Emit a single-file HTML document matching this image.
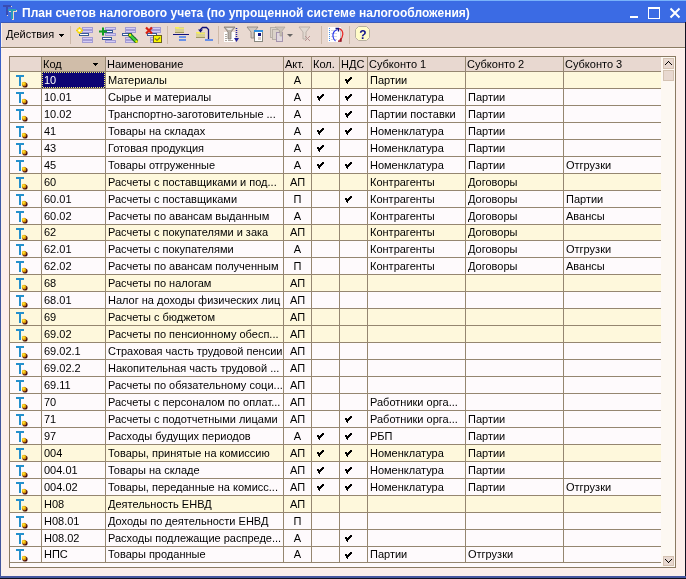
<!DOCTYPE html><html><head><meta charset="utf-8"><style>
*{margin:0;padding:0;box-sizing:border-box}
html,body{width:686px;height:579px;overflow:hidden;background:#FCEFEB;font-family:"Liberation Sans",sans-serif;font-size:11px;color:#000}
.a{position:absolute}
.t{position:absolute;white-space:nowrap;line-height:13px;font-size:11px;will-change:transform}
.ic{position:absolute}

</style></head><body>
<div class="a" style="left:0;top:0;width:686px;height:22px;background:#3B6BE4"></div>
<div class="a" style="left:0;top:0;width:686px;height:1px;background:#78B2FA"></div>
<div class="a" style="left:0;top:22px;width:686px;height:1px;background:#3A58B4"></div>
<svg class="a" style="left:0;top:0" width="22" height="22" viewBox="0 0 22 22" shape-rendering="crispEdges">
<path d="M4 6h8v1H4z M7 6h1v10H7z" fill="#F0D8C8"/>
<path d="M3 5h8v2H3z M6 5h2v10H6z" fill="#3A4CB0"/>
<path d="M9 10h8v2H9z M12 10h2v10H12z" fill="#F0D8C8"/>
<path d="M8 9h8v2H8z M11 9h2v10H11z" fill="#2A9CB8"/>
</svg>
<div class="t" style="left:22px;top:7px;color:#fff;font-weight:bold;font-size:12px;letter-spacing:0.02px">План счетов налогового учета (по упрощенной системе налогообложения)</div>
<div class="a" style="left:630px;top:16px;width:8px;height:2px;background:#fff"></div>
<div class="a" style="left:648px;top:7px;width:12px;height:12px;border:1px solid #fff;border-top-width:2px"></div>
<svg class="a" style="left:669px;top:7px" width="12" height="12" viewBox="0 0 12 12"><path d="M1.5 1.5L10.5 10.5M10.5 1.5L1.5 10.5" stroke="#fff" stroke-width="2"/></svg>
<div class="a" style="left:0;top:22px;width:1px;height:557px;background:linear-gradient(#3A62D0,#40569C 40%,#44549C)"></div>
<div class="a" style="left:685px;top:22px;width:1px;height:557px;background:#101020"></div>
<div class="a" style="left:0;top:576px;width:686px;height:2px;background:#4858A0"></div>
<div class="a" style="left:0;top:578px;width:686px;height:1px;background:#101020"></div>
<div class="a" style="left:1px;top:23px;width:684px;height:24px;background:#E9D9D1"></div>
<div class="a" style="left:1px;top:23px;width:1px;height:553px;background:#F8F0EC"></div>
<div class="a" style="left:1px;top:47px;width:684px;height:1px;background:#8C7C64"></div>
<div class="a" style="left:1px;top:48px;width:684px;height:1px;background:#FFF8F4"></div>
<div class="t" style="left:6px;top:28px">Действия</div>
<svg class="a" style="left:59px;top:34px" width="5" height="3" shape-rendering="crispEdges"><path d="M0 0h5v1h-1v1h-1v1h-1v-1h-1v-1h-1z" fill="#000"/></svg>
<div class="a" style="left:70px;top:26px;width:1px;height:18px;background:#CDB9A9"></div>
<div class="a" style="left:167px;top:26px;width:1px;height:18px;background:#CDB9A9"></div>
<div class="a" style="left:218px;top:26px;width:1px;height:18px;background:#CDB9A9"></div>
<div class="a" style="left:321px;top:26px;width:1px;height:18px;background:#CDB9A9"></div>
<div class="a" style="left:349px;top:26px;width:1px;height:18px;background:#CDB9A9"></div>
<svg class="a" style="left:0;top:0" width="686" height="48" viewBox="0 0 686 48" shape-rendering="crispEdges">
<g fill="#D4CCF6" stroke="#A49CD4" stroke-width="1">
<rect x="82.5" y="27.5" width="10" height="2"/><rect x="82.5" y="30.5" width="10" height="2"/>
<rect x="82.5" y="37.5" width="10" height="2"/><rect x="82.5" y="40.5" width="10" height="2"/>
<rect x="105.5" y="27.5" width="10" height="2"/><rect x="105.5" y="33.5" width="10" height="2"/><rect x="105.5" y="40.5" width="10" height="2"/>
<rect x="125.5" y="27.5" width="10" height="2"/><rect x="125.5" y="30.5" width="10" height="2"/>
<rect x="125.5" y="37.5" width="10" height="2"/><rect x="125.5" y="40.5" width="10" height="2"/>
<rect x="150.5" y="27.5" width="10" height="2"/><rect x="150.5" y="30.5" width="10" height="2"/>
<rect x="150.5" y="37.5" width="4" height="2"/><rect x="150.5" y="40.5" width="4" height="2"/>
</g>
<g fill="#FFFFFF" stroke="#3A5A98" stroke-width="1">
<rect x="79.5" y="33.5" width="9" height="2"/>
<rect x="104.5" y="30.5" width="8" height="2"/><rect x="102.5" y="37.5" width="9" height="2"/>
<rect x="122.5" y="33.5" width="9" height="2"/>
<rect x="147.5" y="33.5" width="9" height="2"/>
</g>
<g shape-rendering="auto">
<path d="M79.5 27v7M76 30.5h7M77.5 28.5l4 4M81.5 28.5l-4 4" stroke="#F8D800" stroke-width="1.5"/>
<circle cx="79.5" cy="30.5" r="1.3" fill="#FFFFF0"/>
<path d="M99 31.5h8M103 27.5v8" stroke="#10A020" stroke-width="2"/>
<path d="M130 35l6 6" stroke="#186818" stroke-width="4" stroke-linecap="round"/>
<path d="M130 35l6 6" stroke="#40D040" stroke-width="2.4"/>
<circle cx="130" cy="35" r="1.2" fill="#F0F000"/><circle cx="136.5" cy="41.5" r="1.2" fill="#F0F000"/>
<path d="M146 27.5l6 6M152 27.5l-6 6" stroke="#D82010" stroke-width="2.2"/>
</g>
<rect x="153.5" y="35.5" width="8" height="7" fill="#F8F800" stroke="#6A6020"/>
<path d="M155 38.5l2 2 3-3" stroke="#807828" stroke-width="1.2" fill="none" shape-rendering="auto"/>
<rect x="175" y="27" width="9" height="6" fill="#D8D098"/><rect x="175" y="27" width="4" height="1" fill="#F8F050"/><rect x="176" y="28" width="8" height="1" fill="#F0E868"/><rect x="175" y="32" width="9" height="1" fill="#A09860"/>
<rect x="173" y="34" width="16" height="1" fill="#10107A"/>
<rect x="179" y="36" width="7" height="2" fill="#6890E8"/><rect x="179" y="39" width="7" height="2" fill="#6890E8"/>
<rect x="196" y="32" width="9" height="6" fill="#D8D098"/><rect x="196" y="32" width="4" height="1" fill="#F8F050"/><rect x="197" y="33" width="8" height="1" fill="#F0E868"/><rect x="196" y="37" width="9" height="1" fill="#A09860"/>
<path d="M208.5 39V29.5l-2-2h-4l-2 2V31" stroke="#10107A" stroke-width="1.3" fill="none" shape-rendering="auto"/>
<path d="M198 29.5h5l-2.5 3z" fill="#10107A" shape-rendering="auto"/>
<rect x="205" y="39" width="8" height="2" fill="#6890E8"/>
<g shape-rendering="auto">
<rect x="224" y="32" width="11" height="10" fill="#FFFFFF"/>
<path d="M225 34.5h2M225 36.5h2M225 38.5h2M225 40.5h2M228 40.5h5" stroke="#B0A8A0" stroke-width="1"/>
<path d="M224 27h11l-4 5v7h-3v-7z" fill="#B8B0A8" stroke="#807870" stroke-width="0.8"/>
<path d="M226 28h7l-2 2h-3z" fill="#E8E4E0"/>
<path d="M236.5 28v11" stroke="#2020A0" stroke-width="1.5" stroke-dasharray="1 1"/>
<path d="M234 38h5l-2.5 4z" fill="#2020A0"/>
<path d="M247 27h11l-4 5v6h-3v-6z" fill="#D0C8C0" stroke="#8A8078" stroke-width="0.8"/>
</g>
<rect x="254.5" y="30.5" width="8" height="11" fill="#FFFFFF" stroke="#888880"/>
<rect x="254" y="30" width="9" height="2" fill="#3090E0"/>
<rect x="258" y="33" width="3" height="3" fill="#10107A"/><rect x="258" y="37" width="3" height="3" fill="#D8D0C8"/>
<g shape-rendering="auto" opacity="0.85">
<rect x="270.5" y="27.5" width="7" height="10" fill="#D8D0C8" stroke="#B0A8A0"/>
<rect x="272.5" y="29.5" width="7" height="10" fill="#D8D0C8" stroke="#B0A8A0"/>
<rect x="276.5" y="32.5" width="6" height="9" fill="#E0D8E0" stroke="#9888A8"/>
<path d="M275 27h10l-3 4v5h-2v-5z" fill="#C8C0B8" stroke="#9A9088" stroke-width="0.6"/>
<path d="M287 34h6l-3 3z" fill="#505050"/>
<path d="M299 27h11l-4 5v7h-3v-7z" fill="#E0D8D0" stroke="#A8A098" stroke-width="0.8"/>
<path d="M305 36l5 5M310 36l-5 5" stroke="#B08888" stroke-width="1"/>
</g>
<rect x="328" y="27" width="13" height="15" fill="#FFFFFF"/>
<rect x="340" y="28" width="1" height="14" fill="#C8C8D0"/>
<path d="M329 27.5v14" stroke="#4A90E8" stroke-width="1" stroke-dasharray="1 1"/>
<path d="M331 30h6M331 33h6M331 36h6M331 39h6" stroke="#D8D8E0" stroke-width="1"/>
<g shape-rendering="auto" fill="none">
<path d="M337.5 29.5C334.5 30.5 332.5 33 333 36.5C333.3 38.5 334 40 335.5 41" stroke="#2A3AF0" stroke-width="1.2"/>
<path d="M339 28.5C341.5 29.5 343 32 342.8 34.5C342.6 37 341.5 39 339.5 40.5" stroke="#E82020" stroke-width="1.2"/>
<path d="M335.5 28.5h3v3" stroke="#10107A" stroke-width="1.3"/>
<path d="M338 41.2h3v-3" stroke="#900010" stroke-width="1.3"/>
</g>
<path d="M358.5 26.5h8l3 3v8l-3 3h-8l-3-3v-8z" fill="#FFFBC8" stroke="#B8B0A0" shape-rendering="auto"/>
<text x="359.3" y="38.5" font-family="Liberation Sans" font-weight="bold" font-size="12" fill="#10108A">?</text>
</svg>
<div class="a" style="left:9px;top:56px;width:667px;height:512px;border:1px solid #8A7A62;background:#FEFAFC"></div>
<div class="a" style="left:10px;top:57px;width:651px;height:14px;background:#E8D8D0"></div>
<div class="a" style="left:42px;top:57px;width:63px;height:14px;background:#D0BDA9"></div>
<svg class="a" style="left:93px;top:63px" width="5" height="3" shape-rendering="crispEdges"><path d="M0 0h5v1h-1v1h-1v1h-1v-1h-1v-1h-1z" fill="#000"/></svg>
<div class="t" style="left:43px;top:58px">Код</div>
<div class="t" style="left:107px;top:58px">Наименование</div>
<div class="t" style="left:285px;top:58px">Акт.</div>
<div class="t" style="left:313px;top:58px">Кол.</div>
<div class="t" style="left:341px;top:58px">НДС</div>
<div class="t" style="left:369px;top:58px">Субконто 1</div>
<div class="t" style="left:467px;top:58px">Субконто 2</div>
<div class="t" style="left:565px;top:58px">Субконто 3</div>
<div class="a" style="left:10px;top:72px;width:651px;height:16px;background:#FEF8DC"></div>
<svg class="a" style="left:16px;top:75px" width="13" height="13" viewBox="0 0 13 13"><path d="M0 0h8v2H0z M3 0h2v11H3z" fill="#2490CC" shape-rendering="crispEdges"/><circle cx="9" cy="10" r="2.6" fill="#4A1010"/><circle cx="8.1" cy="9.1" r="2.3" fill="#D89810"/><circle cx="7.6" cy="8.6" r="1.3" fill="#FFE028"/></svg>
<div class="a" style="left:42px;top:72px;width:63px;height:16px;background:#0C0474"></div>
<svg class="a" style="left:42px;top:72px" width="63" height="16" shape-rendering="crispEdges"><path d="M0 0h1v1h-1zM1 15h1v1h-1zM2 0h1v1h-1zM3 15h1v1h-1zM4 0h1v1h-1zM5 15h1v1h-1zM6 0h1v1h-1zM7 15h1v1h-1zM8 0h1v1h-1zM9 15h1v1h-1zM10 0h1v1h-1zM11 15h1v1h-1zM12 0h1v1h-1zM13 15h1v1h-1zM14 0h1v1h-1zM15 15h1v1h-1zM16 0h1v1h-1zM17 15h1v1h-1zM18 0h1v1h-1zM19 15h1v1h-1zM20 0h1v1h-1zM21 15h1v1h-1zM22 0h1v1h-1zM23 15h1v1h-1zM24 0h1v1h-1zM25 15h1v1h-1zM26 0h1v1h-1zM27 15h1v1h-1zM28 0h1v1h-1zM29 15h1v1h-1zM30 0h1v1h-1zM31 15h1v1h-1zM32 0h1v1h-1zM33 15h1v1h-1zM34 0h1v1h-1zM35 15h1v1h-1zM36 0h1v1h-1zM37 15h1v1h-1zM38 0h1v1h-1zM39 15h1v1h-1zM40 0h1v1h-1zM41 15h1v1h-1zM42 0h1v1h-1zM43 15h1v1h-1zM44 0h1v1h-1zM45 15h1v1h-1zM46 0h1v1h-1zM47 15h1v1h-1zM48 0h1v1h-1zM49 15h1v1h-1zM50 0h1v1h-1zM51 15h1v1h-1zM52 0h1v1h-1zM53 15h1v1h-1zM54 0h1v1h-1zM55 15h1v1h-1zM56 0h1v1h-1zM57 15h1v1h-1zM58 0h1v1h-1zM59 15h1v1h-1zM60 0h1v1h-1zM61 15h1v1h-1zM62 0h1v1h-1zM0 2h1v1h-1zM62 2h1v1h-1zM0 4h1v1h-1zM62 4h1v1h-1zM0 6h1v1h-1zM62 6h1v1h-1zM0 8h1v1h-1zM62 8h1v1h-1zM0 10h1v1h-1zM62 10h1v1h-1zM0 12h1v1h-1zM62 12h1v1h-1zM0 14h1v1h-1zM62 14h1v1h-1z" fill="#F0F070"/></svg>
<div class="t" style="left:44px;top:74px;color:#fff">10</div>
<div class="t" style="left:108px;top:74px">Материалы</div>
<div class="t" style="left:284px;top:74px;width:27px;text-align:center">А</div>
<svg class="a" style="left:345px;top:77px" width="7" height="7" shape-rendering="crispEdges"><path d="M5 0h2v1h-2zM4 1h3v1h-3zM0 2h2v1h-2zM3 2h3v1h-3zM0 3h5v1h-5zM1 4h3v1h-3zM1 5h2v1h-2zM2 6h1v1h-1z" fill="#000"/></svg>
<div class="t" style="left:370px;top:74px">Партии</div>
<div class="a" style="left:10px;top:89px;width:651px;height:16px;background:#FEFAFC"></div>
<svg class="a" style="left:16px;top:92px" width="13" height="13" viewBox="0 0 13 13"><path d="M0 0h8v2H0z M3 0h2v11H3z" fill="#2490CC" shape-rendering="crispEdges"/><circle cx="9" cy="10" r="2.6" fill="#4A1010"/><circle cx="8.1" cy="9.1" r="2.3" fill="#D89810"/><circle cx="7.6" cy="8.6" r="1.3" fill="#FFE028"/></svg>
<div class="t" style="left:44px;top:91px">10.01</div>
<div class="t" style="left:108px;top:91px">Сырье и материалы</div>
<div class="t" style="left:284px;top:91px;width:27px;text-align:center">А</div>
<svg class="a" style="left:317px;top:94px" width="7" height="7" shape-rendering="crispEdges"><path d="M5 0h2v1h-2zM4 1h3v1h-3zM0 2h2v1h-2zM3 2h3v1h-3zM0 3h5v1h-5zM1 4h3v1h-3zM1 5h2v1h-2zM2 6h1v1h-1z" fill="#000"/></svg>
<svg class="a" style="left:345px;top:94px" width="7" height="7" shape-rendering="crispEdges"><path d="M5 0h2v1h-2zM4 1h3v1h-3zM0 2h2v1h-2zM3 2h3v1h-3zM0 3h5v1h-5zM1 4h3v1h-3zM1 5h2v1h-2zM2 6h1v1h-1z" fill="#000"/></svg>
<div class="t" style="left:370px;top:91px">Номенклатура</div>
<div class="t" style="left:468px;top:91px">Партии</div>
<div class="a" style="left:10px;top:106px;width:651px;height:16px;background:#FEFAFC"></div>
<svg class="a" style="left:16px;top:109px" width="13" height="13" viewBox="0 0 13 13"><path d="M0 0h8v2H0z M3 0h2v11H3z" fill="#2490CC" shape-rendering="crispEdges"/><circle cx="9" cy="10" r="2.6" fill="#4A1010"/><circle cx="8.1" cy="9.1" r="2.3" fill="#D89810"/><circle cx="7.6" cy="8.6" r="1.3" fill="#FFE028"/></svg>
<div class="t" style="left:44px;top:108px">10.02</div>
<div class="t" style="left:108px;top:108px">Транспортно-заготовительные ...</div>
<div class="t" style="left:284px;top:108px;width:27px;text-align:center">А</div>
<svg class="a" style="left:345px;top:111px" width="7" height="7" shape-rendering="crispEdges"><path d="M5 0h2v1h-2zM4 1h3v1h-3zM0 2h2v1h-2zM3 2h3v1h-3zM0 3h5v1h-5zM1 4h3v1h-3zM1 5h2v1h-2zM2 6h1v1h-1z" fill="#000"/></svg>
<div class="t" style="left:370px;top:108px">Партии поставки</div>
<div class="t" style="left:468px;top:108px">Партии</div>
<div class="a" style="left:10px;top:123px;width:651px;height:16px;background:#FEFAFC"></div>
<svg class="a" style="left:16px;top:126px" width="13" height="13" viewBox="0 0 13 13"><path d="M0 0h8v2H0z M3 0h2v11H3z" fill="#2490CC" shape-rendering="crispEdges"/><circle cx="9" cy="10" r="2.6" fill="#4A1010"/><circle cx="8.1" cy="9.1" r="2.3" fill="#D89810"/><circle cx="7.6" cy="8.6" r="1.3" fill="#FFE028"/></svg>
<div class="t" style="left:44px;top:125px">41</div>
<div class="t" style="left:108px;top:125px">Товары на складах</div>
<div class="t" style="left:284px;top:125px;width:27px;text-align:center">А</div>
<svg class="a" style="left:317px;top:128px" width="7" height="7" shape-rendering="crispEdges"><path d="M5 0h2v1h-2zM4 1h3v1h-3zM0 2h2v1h-2zM3 2h3v1h-3zM0 3h5v1h-5zM1 4h3v1h-3zM1 5h2v1h-2zM2 6h1v1h-1z" fill="#000"/></svg>
<svg class="a" style="left:345px;top:128px" width="7" height="7" shape-rendering="crispEdges"><path d="M5 0h2v1h-2zM4 1h3v1h-3zM0 2h2v1h-2zM3 2h3v1h-3zM0 3h5v1h-5zM1 4h3v1h-3zM1 5h2v1h-2zM2 6h1v1h-1z" fill="#000"/></svg>
<div class="t" style="left:370px;top:125px">Номенклатура</div>
<div class="t" style="left:468px;top:125px">Партии</div>
<div class="a" style="left:10px;top:140px;width:651px;height:16px;background:#FEFAFC"></div>
<svg class="a" style="left:16px;top:143px" width="13" height="13" viewBox="0 0 13 13"><path d="M0 0h8v2H0z M3 0h2v11H3z" fill="#2490CC" shape-rendering="crispEdges"/><circle cx="9" cy="10" r="2.6" fill="#4A1010"/><circle cx="8.1" cy="9.1" r="2.3" fill="#D89810"/><circle cx="7.6" cy="8.6" r="1.3" fill="#FFE028"/></svg>
<div class="t" style="left:44px;top:142px">43</div>
<div class="t" style="left:108px;top:142px">Готовая продукция</div>
<div class="t" style="left:284px;top:142px;width:27px;text-align:center">А</div>
<svg class="a" style="left:317px;top:145px" width="7" height="7" shape-rendering="crispEdges"><path d="M5 0h2v1h-2zM4 1h3v1h-3zM0 2h2v1h-2zM3 2h3v1h-3zM0 3h5v1h-5zM1 4h3v1h-3zM1 5h2v1h-2zM2 6h1v1h-1z" fill="#000"/></svg>
<div class="t" style="left:370px;top:142px">Номенклатура</div>
<div class="t" style="left:468px;top:142px">Партии</div>
<div class="a" style="left:10px;top:157px;width:651px;height:16px;background:#FEFAFC"></div>
<svg class="a" style="left:16px;top:160px" width="13" height="13" viewBox="0 0 13 13"><path d="M0 0h8v2H0z M3 0h2v11H3z" fill="#2490CC" shape-rendering="crispEdges"/><circle cx="9" cy="10" r="2.6" fill="#4A1010"/><circle cx="8.1" cy="9.1" r="2.3" fill="#D89810"/><circle cx="7.6" cy="8.6" r="1.3" fill="#FFE028"/></svg>
<div class="t" style="left:44px;top:159px">45</div>
<div class="t" style="left:108px;top:159px">Товары отгруженные</div>
<div class="t" style="left:284px;top:159px;width:27px;text-align:center">А</div>
<svg class="a" style="left:317px;top:162px" width="7" height="7" shape-rendering="crispEdges"><path d="M5 0h2v1h-2zM4 1h3v1h-3zM0 2h2v1h-2zM3 2h3v1h-3zM0 3h5v1h-5zM1 4h3v1h-3zM1 5h2v1h-2zM2 6h1v1h-1z" fill="#000"/></svg>
<svg class="a" style="left:345px;top:162px" width="7" height="7" shape-rendering="crispEdges"><path d="M5 0h2v1h-2zM4 1h3v1h-3zM0 2h2v1h-2zM3 2h3v1h-3zM0 3h5v1h-5zM1 4h3v1h-3zM1 5h2v1h-2zM2 6h1v1h-1z" fill="#000"/></svg>
<div class="t" style="left:370px;top:159px">Номенклатура</div>
<div class="t" style="left:468px;top:159px">Партии</div>
<div class="t" style="left:566px;top:159px">Отгрузки</div>
<div class="a" style="left:10px;top:174px;width:651px;height:16px;background:#FEF8DC"></div>
<svg class="a" style="left:16px;top:177px" width="13" height="13" viewBox="0 0 13 13"><path d="M0 0h8v2H0z M3 0h2v11H3z" fill="#2490CC" shape-rendering="crispEdges"/><circle cx="9" cy="10" r="2.6" fill="#4A1010"/><circle cx="8.1" cy="9.1" r="2.3" fill="#D89810"/><circle cx="7.6" cy="8.6" r="1.3" fill="#FFE028"/></svg>
<div class="t" style="left:44px;top:176px">60</div>
<div class="t" style="left:108px;top:176px">Расчеты с поставщиками и под...</div>
<div class="t" style="left:284px;top:176px;width:27px;text-align:center">АП</div>
<div class="t" style="left:370px;top:176px">Контрагенты</div>
<div class="t" style="left:468px;top:176px">Договоры</div>
<div class="a" style="left:10px;top:191px;width:651px;height:16px;background:#FEFAFC"></div>
<svg class="a" style="left:16px;top:194px" width="13" height="13" viewBox="0 0 13 13"><path d="M0 0h8v2H0z M3 0h2v11H3z" fill="#2490CC" shape-rendering="crispEdges"/><circle cx="9" cy="10" r="2.6" fill="#4A1010"/><circle cx="8.1" cy="9.1" r="2.3" fill="#D89810"/><circle cx="7.6" cy="8.6" r="1.3" fill="#FFE028"/></svg>
<div class="t" style="left:44px;top:193px">60.01</div>
<div class="t" style="left:108px;top:193px">Расчеты с поставщиками</div>
<div class="t" style="left:284px;top:193px;width:27px;text-align:center">П</div>
<svg class="a" style="left:345px;top:196px" width="7" height="7" shape-rendering="crispEdges"><path d="M5 0h2v1h-2zM4 1h3v1h-3zM0 2h2v1h-2zM3 2h3v1h-3zM0 3h5v1h-5zM1 4h3v1h-3zM1 5h2v1h-2zM2 6h1v1h-1z" fill="#000"/></svg>
<div class="t" style="left:370px;top:193px">Контрагенты</div>
<div class="t" style="left:468px;top:193px">Договоры</div>
<div class="t" style="left:566px;top:193px">Партии</div>
<div class="a" style="left:10px;top:208px;width:651px;height:16px;background:#FEFAFC"></div>
<svg class="a" style="left:16px;top:211px" width="13" height="13" viewBox="0 0 13 13"><path d="M0 0h8v2H0z M3 0h2v11H3z" fill="#2490CC" shape-rendering="crispEdges"/><circle cx="9" cy="10" r="2.6" fill="#4A1010"/><circle cx="8.1" cy="9.1" r="2.3" fill="#D89810"/><circle cx="7.6" cy="8.6" r="1.3" fill="#FFE028"/></svg>
<div class="t" style="left:44px;top:210px">60.02</div>
<div class="t" style="left:108px;top:210px">Расчеты по авансам выданным</div>
<div class="t" style="left:284px;top:210px;width:27px;text-align:center">А</div>
<div class="t" style="left:370px;top:210px">Контрагенты</div>
<div class="t" style="left:468px;top:210px">Договоры</div>
<div class="t" style="left:566px;top:210px">Авансы</div>
<div class="a" style="left:10px;top:225px;width:651px;height:15px;background:#FEF8DC"></div>
<svg class="a" style="left:16px;top:228px" width="13" height="13" viewBox="0 0 13 13"><path d="M0 0h8v2H0z M3 0h2v11H3z" fill="#2490CC" shape-rendering="crispEdges"/><circle cx="9" cy="10" r="2.6" fill="#4A1010"/><circle cx="8.1" cy="9.1" r="2.3" fill="#D89810"/><circle cx="7.6" cy="8.6" r="1.3" fill="#FFE028"/></svg>
<div class="t" style="left:44px;top:226px">62</div>
<div class="t" style="left:108px;top:226px">Расчеты с покупателями и зака</div>
<div class="t" style="left:284px;top:226px;width:27px;text-align:center">АП</div>
<div class="t" style="left:370px;top:226px">Контрагенты</div>
<div class="t" style="left:468px;top:226px">Договоры</div>
<div class="a" style="left:10px;top:241px;width:651px;height:16px;background:#FEFAFC"></div>
<svg class="a" style="left:16px;top:244px" width="13" height="13" viewBox="0 0 13 13"><path d="M0 0h8v2H0z M3 0h2v11H3z" fill="#2490CC" shape-rendering="crispEdges"/><circle cx="9" cy="10" r="2.6" fill="#4A1010"/><circle cx="8.1" cy="9.1" r="2.3" fill="#D89810"/><circle cx="7.6" cy="8.6" r="1.3" fill="#FFE028"/></svg>
<div class="t" style="left:44px;top:243px">62.01</div>
<div class="t" style="left:108px;top:243px">Расчеты с покупателями</div>
<div class="t" style="left:284px;top:243px;width:27px;text-align:center">А</div>
<div class="t" style="left:370px;top:243px">Контрагенты</div>
<div class="t" style="left:468px;top:243px">Договоры</div>
<div class="t" style="left:566px;top:243px">Отгрузки</div>
<div class="a" style="left:10px;top:258px;width:651px;height:16px;background:#FEFAFC"></div>
<svg class="a" style="left:16px;top:261px" width="13" height="13" viewBox="0 0 13 13"><path d="M0 0h8v2H0z M3 0h2v11H3z" fill="#2490CC" shape-rendering="crispEdges"/><circle cx="9" cy="10" r="2.6" fill="#4A1010"/><circle cx="8.1" cy="9.1" r="2.3" fill="#D89810"/><circle cx="7.6" cy="8.6" r="1.3" fill="#FFE028"/></svg>
<div class="t" style="left:44px;top:260px">62.02</div>
<div class="t" style="left:108px;top:260px">Расчеты по авансам полученным</div>
<div class="t" style="left:284px;top:260px;width:27px;text-align:center">П</div>
<div class="t" style="left:370px;top:260px">Контрагенты</div>
<div class="t" style="left:468px;top:260px">Договоры</div>
<div class="t" style="left:566px;top:260px">Авансы</div>
<div class="a" style="left:10px;top:275px;width:651px;height:16px;background:#FEF8DC"></div>
<svg class="a" style="left:16px;top:278px" width="13" height="13" viewBox="0 0 13 13"><path d="M0 0h8v2H0z M3 0h2v11H3z" fill="#2490CC" shape-rendering="crispEdges"/><circle cx="9" cy="10" r="2.6" fill="#4A1010"/><circle cx="8.1" cy="9.1" r="2.3" fill="#D89810"/><circle cx="7.6" cy="8.6" r="1.3" fill="#FFE028"/></svg>
<div class="t" style="left:44px;top:277px">68</div>
<div class="t" style="left:108px;top:277px">Расчеты по налогам</div>
<div class="t" style="left:284px;top:277px;width:27px;text-align:center">АП</div>
<div class="a" style="left:10px;top:292px;width:651px;height:16px;background:#FEFAFC"></div>
<svg class="a" style="left:16px;top:295px" width="13" height="13" viewBox="0 0 13 13"><path d="M0 0h8v2H0z M3 0h2v11H3z" fill="#2490CC" shape-rendering="crispEdges"/><circle cx="9" cy="10" r="2.6" fill="#4A1010"/><circle cx="8.1" cy="9.1" r="2.3" fill="#D89810"/><circle cx="7.6" cy="8.6" r="1.3" fill="#FFE028"/></svg>
<div class="t" style="left:44px;top:294px">68.01</div>
<div class="t" style="left:108px;top:294px">Налог на доходы физических лиц</div>
<div class="t" style="left:284px;top:294px;width:27px;text-align:center">АП</div>
<div class="a" style="left:10px;top:309px;width:651px;height:16px;background:#FEF8DC"></div>
<svg class="a" style="left:16px;top:312px" width="13" height="13" viewBox="0 0 13 13"><path d="M0 0h8v2H0z M3 0h2v11H3z" fill="#2490CC" shape-rendering="crispEdges"/><circle cx="9" cy="10" r="2.6" fill="#4A1010"/><circle cx="8.1" cy="9.1" r="2.3" fill="#D89810"/><circle cx="7.6" cy="8.6" r="1.3" fill="#FFE028"/></svg>
<div class="t" style="left:44px;top:311px">69</div>
<div class="t" style="left:108px;top:311px">Расчеты с бюджетом</div>
<div class="t" style="left:284px;top:311px;width:27px;text-align:center">АП</div>
<div class="a" style="left:10px;top:326px;width:651px;height:16px;background:#FEF8DC"></div>
<svg class="a" style="left:16px;top:329px" width="13" height="13" viewBox="0 0 13 13"><path d="M0 0h8v2H0z M3 0h2v11H3z" fill="#2490CC" shape-rendering="crispEdges"/><circle cx="9" cy="10" r="2.6" fill="#4A1010"/><circle cx="8.1" cy="9.1" r="2.3" fill="#D89810"/><circle cx="7.6" cy="8.6" r="1.3" fill="#FFE028"/></svg>
<div class="t" style="left:44px;top:328px">69.02</div>
<div class="t" style="left:108px;top:328px">Расчеты по пенсионному обесп...</div>
<div class="t" style="left:284px;top:328px;width:27px;text-align:center">АП</div>
<div class="a" style="left:10px;top:343px;width:651px;height:16px;background:#FEFAFC"></div>
<svg class="a" style="left:16px;top:346px" width="13" height="13" viewBox="0 0 13 13"><path d="M0 0h8v2H0z M3 0h2v11H3z" fill="#2490CC" shape-rendering="crispEdges"/><circle cx="9" cy="10" r="2.6" fill="#4A1010"/><circle cx="8.1" cy="9.1" r="2.3" fill="#D89810"/><circle cx="7.6" cy="8.6" r="1.3" fill="#FFE028"/></svg>
<div class="t" style="left:44px;top:345px">69.02.1</div>
<div class="t" style="left:108px;top:345px">Страховая часть трудовой пенсии</div>
<div class="t" style="left:284px;top:345px;width:27px;text-align:center">АП</div>
<div class="a" style="left:10px;top:360px;width:651px;height:16px;background:#FEFAFC"></div>
<svg class="a" style="left:16px;top:363px" width="13" height="13" viewBox="0 0 13 13"><path d="M0 0h8v2H0z M3 0h2v11H3z" fill="#2490CC" shape-rendering="crispEdges"/><circle cx="9" cy="10" r="2.6" fill="#4A1010"/><circle cx="8.1" cy="9.1" r="2.3" fill="#D89810"/><circle cx="7.6" cy="8.6" r="1.3" fill="#FFE028"/></svg>
<div class="t" style="left:44px;top:362px">69.02.2</div>
<div class="t" style="left:108px;top:362px">Накопительная часть трудовой ...</div>
<div class="t" style="left:284px;top:362px;width:27px;text-align:center">АП</div>
<div class="a" style="left:10px;top:377px;width:651px;height:16px;background:#FEFAFC"></div>
<svg class="a" style="left:16px;top:380px" width="13" height="13" viewBox="0 0 13 13"><path d="M0 0h8v2H0z M3 0h2v11H3z" fill="#2490CC" shape-rendering="crispEdges"/><circle cx="9" cy="10" r="2.6" fill="#4A1010"/><circle cx="8.1" cy="9.1" r="2.3" fill="#D89810"/><circle cx="7.6" cy="8.6" r="1.3" fill="#FFE028"/></svg>
<div class="t" style="left:44px;top:379px">69.11</div>
<div class="t" style="left:108px;top:379px">Расчеты по обязательному соци...</div>
<div class="t" style="left:284px;top:379px;width:27px;text-align:center">АП</div>
<div class="a" style="left:10px;top:394px;width:651px;height:16px;background:#FEFAFC"></div>
<svg class="a" style="left:16px;top:397px" width="13" height="13" viewBox="0 0 13 13"><path d="M0 0h8v2H0z M3 0h2v11H3z" fill="#2490CC" shape-rendering="crispEdges"/><circle cx="9" cy="10" r="2.6" fill="#4A1010"/><circle cx="8.1" cy="9.1" r="2.3" fill="#D89810"/><circle cx="7.6" cy="8.6" r="1.3" fill="#FFE028"/></svg>
<div class="t" style="left:44px;top:396px">70</div>
<div class="t" style="left:108px;top:396px">Расчеты с персоналом по оплат...</div>
<div class="t" style="left:284px;top:396px;width:27px;text-align:center">АП</div>
<div class="t" style="left:370px;top:396px">Работники орга...</div>
<div class="a" style="left:10px;top:411px;width:651px;height:16px;background:#FEFAFC"></div>
<svg class="a" style="left:16px;top:414px" width="13" height="13" viewBox="0 0 13 13"><path d="M0 0h8v2H0z M3 0h2v11H3z" fill="#2490CC" shape-rendering="crispEdges"/><circle cx="9" cy="10" r="2.6" fill="#4A1010"/><circle cx="8.1" cy="9.1" r="2.3" fill="#D89810"/><circle cx="7.6" cy="8.6" r="1.3" fill="#FFE028"/></svg>
<div class="t" style="left:44px;top:413px">71</div>
<div class="t" style="left:108px;top:413px">Расчеты с подотчетными лицами</div>
<div class="t" style="left:284px;top:413px;width:27px;text-align:center">АП</div>
<svg class="a" style="left:345px;top:416px" width="7" height="7" shape-rendering="crispEdges"><path d="M5 0h2v1h-2zM4 1h3v1h-3zM0 2h2v1h-2zM3 2h3v1h-3zM0 3h5v1h-5zM1 4h3v1h-3zM1 5h2v1h-2zM2 6h1v1h-1z" fill="#000"/></svg>
<div class="t" style="left:370px;top:413px">Работники орга...</div>
<div class="t" style="left:468px;top:413px">Партии</div>
<div class="a" style="left:10px;top:428px;width:651px;height:16px;background:#FEFAFC"></div>
<svg class="a" style="left:16px;top:431px" width="13" height="13" viewBox="0 0 13 13"><path d="M0 0h8v2H0z M3 0h2v11H3z" fill="#2490CC" shape-rendering="crispEdges"/><circle cx="9" cy="10" r="2.6" fill="#4A1010"/><circle cx="8.1" cy="9.1" r="2.3" fill="#D89810"/><circle cx="7.6" cy="8.6" r="1.3" fill="#FFE028"/></svg>
<div class="t" style="left:44px;top:430px">97</div>
<div class="t" style="left:108px;top:430px">Расходы будущих периодов</div>
<div class="t" style="left:284px;top:430px;width:27px;text-align:center">А</div>
<svg class="a" style="left:317px;top:433px" width="7" height="7" shape-rendering="crispEdges"><path d="M5 0h2v1h-2zM4 1h3v1h-3zM0 2h2v1h-2zM3 2h3v1h-3zM0 3h5v1h-5zM1 4h3v1h-3zM1 5h2v1h-2zM2 6h1v1h-1z" fill="#000"/></svg>
<svg class="a" style="left:345px;top:433px" width="7" height="7" shape-rendering="crispEdges"><path d="M5 0h2v1h-2zM4 1h3v1h-3zM0 2h2v1h-2zM3 2h3v1h-3zM0 3h5v1h-5zM1 4h3v1h-3zM1 5h2v1h-2zM2 6h1v1h-1z" fill="#000"/></svg>
<div class="t" style="left:370px;top:430px">РБП</div>
<div class="t" style="left:468px;top:430px">Партии</div>
<div class="a" style="left:10px;top:445px;width:651px;height:16px;background:#FEF8DC"></div>
<svg class="a" style="left:16px;top:448px" width="13" height="13" viewBox="0 0 13 13"><path d="M0 0h8v2H0z M3 0h2v11H3z" fill="#2490CC" shape-rendering="crispEdges"/><circle cx="9" cy="10" r="2.6" fill="#4A1010"/><circle cx="8.1" cy="9.1" r="2.3" fill="#D89810"/><circle cx="7.6" cy="8.6" r="1.3" fill="#FFE028"/></svg>
<div class="t" style="left:44px;top:447px">004</div>
<div class="t" style="left:108px;top:447px">Товары, принятые на комиссию</div>
<div class="t" style="left:284px;top:447px;width:27px;text-align:center">АП</div>
<svg class="a" style="left:317px;top:450px" width="7" height="7" shape-rendering="crispEdges"><path d="M5 0h2v1h-2zM4 1h3v1h-3zM0 2h2v1h-2zM3 2h3v1h-3zM0 3h5v1h-5zM1 4h3v1h-3zM1 5h2v1h-2zM2 6h1v1h-1z" fill="#000"/></svg>
<svg class="a" style="left:345px;top:450px" width="7" height="7" shape-rendering="crispEdges"><path d="M5 0h2v1h-2zM4 1h3v1h-3zM0 2h2v1h-2zM3 2h3v1h-3zM0 3h5v1h-5zM1 4h3v1h-3zM1 5h2v1h-2zM2 6h1v1h-1z" fill="#000"/></svg>
<div class="t" style="left:370px;top:447px">Номенклатура</div>
<div class="t" style="left:468px;top:447px">Партии</div>
<div class="a" style="left:10px;top:462px;width:651px;height:16px;background:#FEFAFC"></div>
<svg class="a" style="left:16px;top:465px" width="13" height="13" viewBox="0 0 13 13"><path d="M0 0h8v2H0z M3 0h2v11H3z" fill="#2490CC" shape-rendering="crispEdges"/><circle cx="9" cy="10" r="2.6" fill="#4A1010"/><circle cx="8.1" cy="9.1" r="2.3" fill="#D89810"/><circle cx="7.6" cy="8.6" r="1.3" fill="#FFE028"/></svg>
<div class="t" style="left:44px;top:464px">004.01</div>
<div class="t" style="left:108px;top:464px">Товары на складе</div>
<div class="t" style="left:284px;top:464px;width:27px;text-align:center">АП</div>
<svg class="a" style="left:317px;top:467px" width="7" height="7" shape-rendering="crispEdges"><path d="M5 0h2v1h-2zM4 1h3v1h-3zM0 2h2v1h-2zM3 2h3v1h-3zM0 3h5v1h-5zM1 4h3v1h-3zM1 5h2v1h-2zM2 6h1v1h-1z" fill="#000"/></svg>
<svg class="a" style="left:345px;top:467px" width="7" height="7" shape-rendering="crispEdges"><path d="M5 0h2v1h-2zM4 1h3v1h-3zM0 2h2v1h-2zM3 2h3v1h-3zM0 3h5v1h-5zM1 4h3v1h-3zM1 5h2v1h-2zM2 6h1v1h-1z" fill="#000"/></svg>
<div class="t" style="left:370px;top:464px">Номенклатура</div>
<div class="t" style="left:468px;top:464px">Партии</div>
<div class="a" style="left:10px;top:479px;width:651px;height:16px;background:#FEFAFC"></div>
<svg class="a" style="left:16px;top:482px" width="13" height="13" viewBox="0 0 13 13"><path d="M0 0h8v2H0z M3 0h2v11H3z" fill="#2490CC" shape-rendering="crispEdges"/><circle cx="9" cy="10" r="2.6" fill="#4A1010"/><circle cx="8.1" cy="9.1" r="2.3" fill="#D89810"/><circle cx="7.6" cy="8.6" r="1.3" fill="#FFE028"/></svg>
<div class="t" style="left:44px;top:481px">004.02</div>
<div class="t" style="left:108px;top:481px">Товары, переданные на комисс...</div>
<div class="t" style="left:284px;top:481px;width:27px;text-align:center">АП</div>
<svg class="a" style="left:317px;top:484px" width="7" height="7" shape-rendering="crispEdges"><path d="M5 0h2v1h-2zM4 1h3v1h-3zM0 2h2v1h-2zM3 2h3v1h-3zM0 3h5v1h-5zM1 4h3v1h-3zM1 5h2v1h-2zM2 6h1v1h-1z" fill="#000"/></svg>
<svg class="a" style="left:345px;top:484px" width="7" height="7" shape-rendering="crispEdges"><path d="M5 0h2v1h-2zM4 1h3v1h-3zM0 2h2v1h-2zM3 2h3v1h-3zM0 3h5v1h-5zM1 4h3v1h-3zM1 5h2v1h-2zM2 6h1v1h-1z" fill="#000"/></svg>
<div class="t" style="left:370px;top:481px">Номенклатура</div>
<div class="t" style="left:468px;top:481px">Партии</div>
<div class="t" style="left:566px;top:481px">Отгрузки</div>
<div class="a" style="left:10px;top:496px;width:651px;height:16px;background:#FEF8DC"></div>
<svg class="a" style="left:16px;top:499px" width="13" height="13" viewBox="0 0 13 13"><path d="M0 0h8v2H0z M3 0h2v11H3z" fill="#2490CC" shape-rendering="crispEdges"/><circle cx="9" cy="10" r="2.6" fill="#4A1010"/><circle cx="8.1" cy="9.1" r="2.3" fill="#D89810"/><circle cx="7.6" cy="8.6" r="1.3" fill="#FFE028"/></svg>
<div class="t" style="left:44px;top:498px">Н08</div>
<div class="t" style="left:108px;top:498px">Деятельность ЕНВД</div>
<div class="t" style="left:284px;top:498px;width:27px;text-align:center">АП</div>
<div class="a" style="left:10px;top:513px;width:651px;height:16px;background:#FEFAFC"></div>
<svg class="a" style="left:16px;top:516px" width="13" height="13" viewBox="0 0 13 13"><path d="M0 0h8v2H0z M3 0h2v11H3z" fill="#2490CC" shape-rendering="crispEdges"/><circle cx="9" cy="10" r="2.6" fill="#4A1010"/><circle cx="8.1" cy="9.1" r="2.3" fill="#D89810"/><circle cx="7.6" cy="8.6" r="1.3" fill="#FFE028"/></svg>
<div class="t" style="left:44px;top:515px">Н08.01</div>
<div class="t" style="left:108px;top:515px">Доходы по деятельности ЕНВД</div>
<div class="t" style="left:284px;top:515px;width:27px;text-align:center">П</div>
<div class="a" style="left:10px;top:530px;width:651px;height:16px;background:#FEFAFC"></div>
<svg class="a" style="left:16px;top:533px" width="13" height="13" viewBox="0 0 13 13"><path d="M0 0h8v2H0z M3 0h2v11H3z" fill="#2490CC" shape-rendering="crispEdges"/><circle cx="9" cy="10" r="2.6" fill="#4A1010"/><circle cx="8.1" cy="9.1" r="2.3" fill="#D89810"/><circle cx="7.6" cy="8.6" r="1.3" fill="#FFE028"/></svg>
<div class="t" style="left:44px;top:532px">Н08.02</div>
<div class="t" style="left:108px;top:532px">Расходы подлежащие распреде...</div>
<div class="t" style="left:284px;top:532px;width:27px;text-align:center">А</div>
<svg class="a" style="left:345px;top:535px" width="7" height="7" shape-rendering="crispEdges"><path d="M5 0h2v1h-2zM4 1h3v1h-3zM0 2h2v1h-2zM3 2h3v1h-3zM0 3h5v1h-5zM1 4h3v1h-3zM1 5h2v1h-2zM2 6h1v1h-1z" fill="#000"/></svg>
<div class="a" style="left:10px;top:547px;width:651px;height:15px;background:#FEFAFC"></div>
<svg class="a" style="left:16px;top:549px" width="13" height="13" viewBox="0 0 13 13"><path d="M0 0h8v2H0z M3 0h2v11H3z" fill="#2490CC" shape-rendering="crispEdges"/><circle cx="9" cy="10" r="2.6" fill="#4A1010"/><circle cx="8.1" cy="9.1" r="2.3" fill="#D89810"/><circle cx="7.6" cy="8.6" r="1.3" fill="#FFE028"/></svg>
<div class="t" style="left:44px;top:548px">НПС</div>
<div class="t" style="left:108px;top:548px">Товары проданные</div>
<div class="t" style="left:284px;top:548px;width:27px;text-align:center">А</div>
<svg class="a" style="left:345px;top:552px" width="7" height="7" shape-rendering="crispEdges"><path d="M5 0h2v1h-2zM4 1h3v1h-3zM0 2h2v1h-2zM3 2h3v1h-3zM0 3h5v1h-5zM1 4h3v1h-3zM1 5h2v1h-2zM2 6h1v1h-1z" fill="#000"/></svg>
<div class="t" style="left:370px;top:548px">Партии</div>
<div class="t" style="left:468px;top:548px">Отгрузки</div>
<div class="a" style="left:10px;top:71px;width:651px;height:1px;background:#958670"></div>
<div class="a" style="left:10px;top:88px;width:651px;height:1px;background:#958670"></div>
<div class="a" style="left:10px;top:105px;width:651px;height:1px;background:#958670"></div>
<div class="a" style="left:10px;top:122px;width:651px;height:1px;background:#958670"></div>
<div class="a" style="left:10px;top:139px;width:651px;height:1px;background:#958670"></div>
<div class="a" style="left:10px;top:156px;width:651px;height:1px;background:#958670"></div>
<div class="a" style="left:10px;top:173px;width:651px;height:1px;background:#958670"></div>
<div class="a" style="left:10px;top:190px;width:651px;height:1px;background:#958670"></div>
<div class="a" style="left:10px;top:207px;width:651px;height:1px;background:#958670"></div>
<div class="a" style="left:10px;top:224px;width:651px;height:1px;background:#958670"></div>
<div class="a" style="left:10px;top:240px;width:651px;height:1px;background:#958670"></div>
<div class="a" style="left:10px;top:257px;width:651px;height:1px;background:#958670"></div>
<div class="a" style="left:10px;top:274px;width:651px;height:1px;background:#958670"></div>
<div class="a" style="left:10px;top:291px;width:651px;height:1px;background:#958670"></div>
<div class="a" style="left:10px;top:308px;width:651px;height:1px;background:#958670"></div>
<div class="a" style="left:10px;top:325px;width:651px;height:1px;background:#958670"></div>
<div class="a" style="left:10px;top:342px;width:651px;height:1px;background:#958670"></div>
<div class="a" style="left:10px;top:359px;width:651px;height:1px;background:#958670"></div>
<div class="a" style="left:10px;top:376px;width:651px;height:1px;background:#958670"></div>
<div class="a" style="left:10px;top:393px;width:651px;height:1px;background:#958670"></div>
<div class="a" style="left:10px;top:410px;width:651px;height:1px;background:#958670"></div>
<div class="a" style="left:10px;top:427px;width:651px;height:1px;background:#958670"></div>
<div class="a" style="left:10px;top:444px;width:651px;height:1px;background:#958670"></div>
<div class="a" style="left:10px;top:461px;width:651px;height:1px;background:#958670"></div>
<div class="a" style="left:10px;top:478px;width:651px;height:1px;background:#958670"></div>
<div class="a" style="left:10px;top:495px;width:651px;height:1px;background:#958670"></div>
<div class="a" style="left:10px;top:512px;width:651px;height:1px;background:#958670"></div>
<div class="a" style="left:10px;top:529px;width:651px;height:1px;background:#958670"></div>
<div class="a" style="left:10px;top:546px;width:651px;height:1px;background:#958670"></div>
<div class="a" style="left:10px;top:562px;width:651px;height:1px;background:#958670"></div>
<div class="a" style="left:41px;top:57px;width:1px;height:505px;background:#958670"></div>
<div class="a" style="left:105px;top:57px;width:1px;height:505px;background:#958670"></div>
<div class="a" style="left:283px;top:57px;width:1px;height:505px;background:#958670"></div>
<div class="a" style="left:311px;top:57px;width:1px;height:505px;background:#958670"></div>
<div class="a" style="left:339px;top:57px;width:1px;height:505px;background:#958670"></div>
<div class="a" style="left:367px;top:57px;width:1px;height:505px;background:#958670"></div>
<div class="a" style="left:465px;top:57px;width:1px;height:505px;background:#958670"></div>
<div class="a" style="left:563px;top:57px;width:1px;height:505px;background:#958670"></div>
<div class="a" style="left:661px;top:57px;width:14px;height:510px;background:#FDF8F2"></div>
<div class="a" style="left:663px;top:58px;width:11px;height:11px;background:#E8D8D0;border:1px solid #D4C2B2"></div>
<svg class="a" style="left:665px;top:61px" width="7" height="4" shape-rendering="crispEdges"><path d="M3 0h1v1h-1zM2 1h1v1h-1zM4 1h1v1h-1zM1 2h1v1h-1zM5 2h1v1h-1zM0 3h1v1h-1zM6 3h1v1h-1z" fill="#000"/></svg>
<div class="a" style="left:663px;top:70px;width:11px;height:11px;background:#E8D8D0;border:1px solid #D4C2B2"></div>
<div class="a" style="left:663px;top:556px;width:11px;height:10px;background:#E8D8D0;border:1px solid #D4C2B2"></div>
<svg class="a" style="left:665px;top:559px" width="7" height="4" shape-rendering="crispEdges"><path d="M0 0h1v1h-1zM6 0h1v1h-1zM1 1h1v1h-1zM5 1h1v1h-1zM2 2h1v1h-1zM4 2h1v1h-1zM3 3h1v1h-1z" fill="#000"/></svg>
</body></html>
